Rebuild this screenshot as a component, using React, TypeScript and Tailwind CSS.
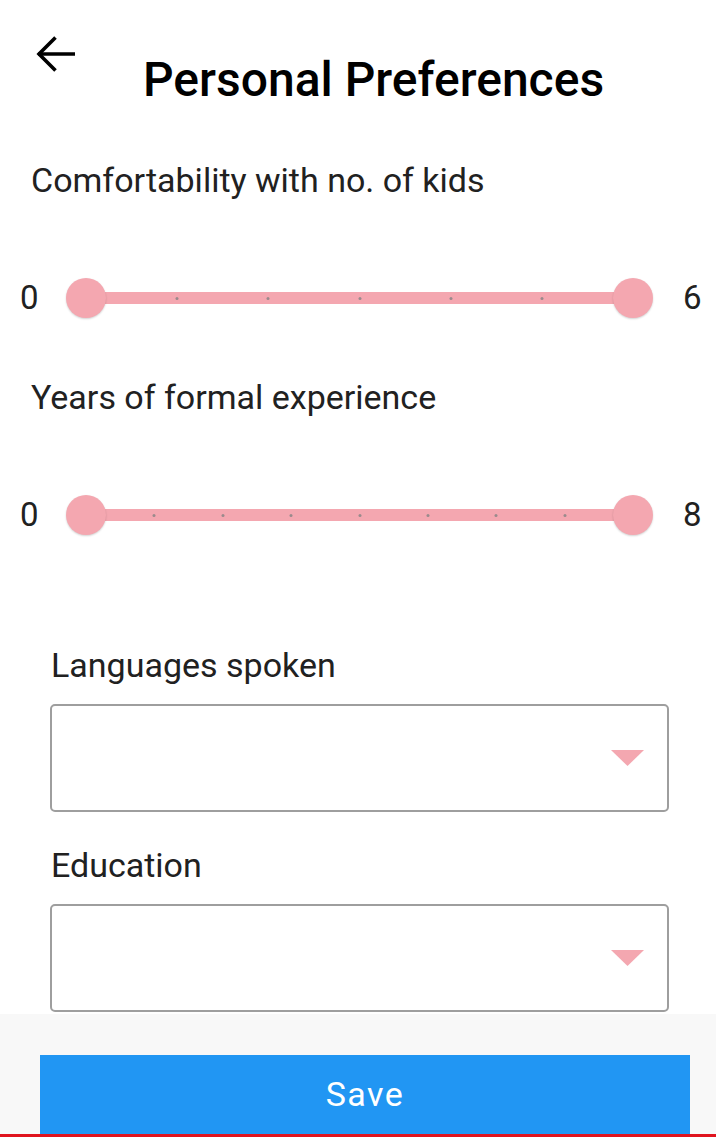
import React from "react";

const PINK = "#f4a7b0";

function RangeSlider({ max }: { max: number }) {
  const ticks = Array.from({ length: max - 1 }, (_, i) => ((i + 1) / max) * 100);
  return (
    <div className="flex h-[40px] items-center">
      <div className="w-[66px] pl-[20px] text-[33px] leading-[38px] text-[#212121]">0</div>
      <div className="relative h-[40px] w-[587px]">
        <div className="absolute left-[20px] right-[20px] top-[14px] h-[12px] bg-[#f4a7b0]">
          {ticks.map((t) => (
            <div
              key={t}
              className="absolute top-[4.5px] h-[3px] w-[3px] -translate-x-1/2 rounded-full bg-[#9a8a8c]"
              style={{ left: `${t}%` }}
            />
          ))}
        </div>
        <div className="absolute left-0 top-0 h-[40px] w-[40px] rounded-full bg-[#f4a7b0] shadow-[0_1px_2px_rgba(0,0,0,0.18)]" />
        <div className="absolute right-0 top-0 h-[40px] w-[40px] rounded-full bg-[#f4a7b0] shadow-[0_1px_2px_rgba(0,0,0,0.18)]" />
      </div>
      <div className="ml-[30px] text-[33px] leading-[38px] text-[#212121]">{max}</div>
    </div>
  );
}

function Dropdown() {
  return (
    <div className="ml-[50px] flex h-[108px] w-[619px] items-center justify-end rounded-[5px] border-2 border-[#9e9e9e] pr-[23px]">
      <svg width="33" height="16" viewBox="0 0 33 16">
        <polygon points="0,0 33,0 16.5,16" fill={PINK} />
      </svg>
    </div>
  );
}

export default function App() {
  return (
    <div
      className="flex h-[1137px] w-[716px] flex-col overflow-hidden bg-white"
      style={{ fontFamily: "Roboto, 'Noto Sans', sans-serif" }}
    >
      <div className="flex items-start">
        <div className="ml-[35px] mt-[35px]">
          <svg width="42" height="38" viewBox="0 0 42 38" fill="none">
            <path d="M3 19 H40" stroke="#000" strokeWidth="3.6" />
            <path d="M20.5 2.5 L4 19 L20.5 35.5" stroke="#000" strokeWidth="3.6" />
          </svg>
        </div>
        <h1 className="ml-[66px] mt-[52px] text-[48px] font-medium leading-[56px] text-black">
          Personal Preferences
        </h1>
      </div>

      <div className="ml-[31px] mt-[53px] text-[34px] leading-[38px] text-[#212121]">
        Comfortability with no. of kids
      </div>
      <div className="mt-[79px]">
        <RangeSlider max={6} />
      </div>

      <div className="ml-[31px] mt-[60px] text-[34px] leading-[38px] text-[#212121]">
        Years of formal experience
      </div>
      <div className="mt-[79px]">
        <RangeSlider max={8} />
      </div>

      <div className="ml-[51px] mt-[111px] text-[34px] leading-[38px] text-[#212121]">
        Languages spoken
      </div>
      <div className="mt-[20px]">
        <Dropdown />
      </div>

      <div className="ml-[51px] mt-[34px] text-[34px] leading-[38px] text-[#212121]">
        Education
      </div>
      <div className="mt-[20px]">
        <Dropdown />
      </div>

      <div className="mt-[2px] flex flex-1 flex-col bg-[#f8f8f8]">
        <div className="mt-[41px] flex flex-1 flex-col">
          <button className="ml-[40px] flex h-[79px] w-[650px] items-center justify-center bg-[#2196f3] text-[34px] tracking-[1.5px] text-white">
            Save
          </button>
        </div>
        <div className="h-[3px] w-full bg-[#e0141e]" />
      </div>
    </div>
  );
}
